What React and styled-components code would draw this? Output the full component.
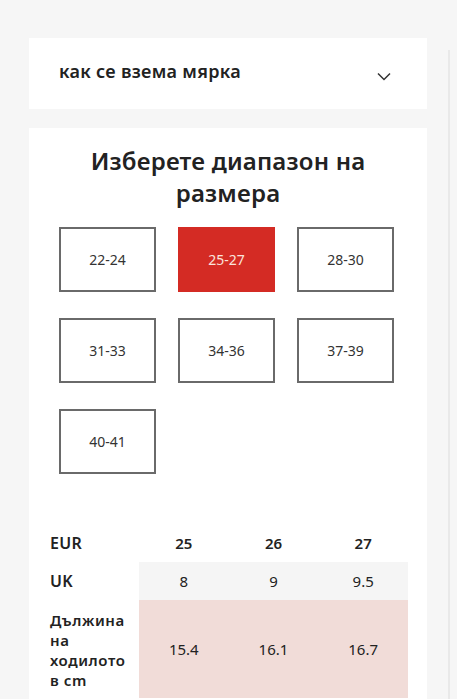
import styled, { createGlobalStyle } from "styled-components";

const GlobalStyle = createGlobalStyle`
  html, body {
    margin: 0;
    padding: 0;
    background: #f6f6f6;
  }
  body {
    font-family: "Noto Sans", "Open Sans", sans-serif;
    color: #222;
  }
`;

const ranges = ["22-24", "25-27", "28-30", "31-33", "34-36", "37-39", "40-41"];

const Page = () => {
  return (
    <Wrapper lang="bg">
      <GlobalStyle />
      <Column>
        <Accordion>
          <AccordionTitle>как се взема мярка</AccordionTitle>
          <svg width="14" height="9" viewBox="0 0 14 9" fill="none">
            <path d="M1 1.5 L7 7.5 L13 1.5" stroke="#333" strokeWidth="1.5" />
          </svg>
        </Accordion>

        <Card>
          <Heading>Изберете диапазон на размера</Heading>

          <RangeGrid>
            {ranges.map((r) => (
              <RangeBox key={r} $active={r === "25-27"}>
                {r}
              </RangeBox>
            ))}
          </RangeGrid>

          <SizeTable>
            <tbody>
              <tr>
                <Label>EUR</Label>
                <Cell $bold>25</Cell>
                <Cell $bold>26</Cell>
                <Cell $bold>27</Cell>
              </tr>
              <tr>
                <Label>UK</Label>
                <Cell $tone="grey">8</Cell>
                <Cell $tone="grey">9</Cell>
                <Cell $tone="grey">9.5</Cell>
              </tr>
              <tr>
                <Label $tall>
                  Дължина
                  <br />
                  на
                  <br />
                  ходилото
                  <br />в cm
                </Label>
                <Cell $tone="pink">15.4</Cell>
                <Cell $tone="pink">16.1</Cell>
                <Cell $tone="pink">16.7</Cell>
              </tr>
            </tbody>
          </SizeTable>
        </Card>
      </Column>
      <Rail />
    </Wrapper>
  );
};

const Wrapper = styled.div`
  display: flex;
  width: 457px;
  min-height: 100vh;
`;

const Column = styled.div`
  width: 398px;
  padding: 38px 0 0 29px;
  display: flex;
  flex-direction: column;
  gap: 19px;
`;

const Rail = styled.div`
  width: 2px;
  margin: 50px 0 0 21px;
  background: #e9e9e9;
`;

const Accordion = styled.div`
  flex-shrink: 0;
  background: #fff;
  height: 71px;
  display: flex;
  align-items: center;
  justify-content: space-between;
  padding: 0 36px 0 30px;
  box-sizing: border-box;

  svg {
    margin-top: 6px;
  }
`;

const AccordionTitle = styled.span`
  font-size: 18px;
  font-weight: 600;
  color: #222;
  letter-spacing: 0.3px;
  margin-top: -6px;
`;

const Card = styled.div`
  flex-shrink: 0;
  background: #fff;
  padding: 17px 0 0;
  min-height: 600px;
`;

const Heading = styled.h2`
  margin: 0 auto;
  width: 320px;
  text-align: center;
  font-size: 24px;
  line-height: 32px;
  font-weight: 600;
  color: #222;
  letter-spacing: 0.2px;
`;

const RangeGrid = styled.div`
  display: grid;
  grid-template-columns: repeat(3, 97px);
  column-gap: 22px;
  row-gap: 26px;
  margin: 18px 0 0 30px;
`;

const RangeBox = styled.div`
  height: 65px;
  box-sizing: border-box;
  display: flex;
  align-items: center;
  justify-content: center;
  font-size: 14px;
  color: ${({ $active }) => ($active ? "#fbe3dc" : "#333")};
  background: ${({ $active }) => ($active ? "#d42b24" : "#fff")};
  border: 2px solid ${({ $active }) => ($active ? "#d42b24" : "#6a6a6a")};
`;

const SizeTable = styled.table`
  margin: 50px 0 0 21px;
  border-collapse: collapse;
  width: 358px;
  table-layout: fixed;
`;

const Label = styled.td`
  width: 89px;
  padding: ${({ $tall }) => ($tall ? "10px 0 8px" : "0")};
  height: ${({ $tall }) => ($tall ? "auto" : "38px")};
  font-size: ${({ $tall }) => ($tall ? "15px" : "16px")};
  line-height: 20px;
  font-weight: 600;
  color: #222;
  letter-spacing: ${({ $tall }) => ($tall ? "0.6px" : "0.3px")};
  vertical-align: middle;
`;

const Cell = styled.td`
  text-align: center;
  font-size: 15px;
  font-weight: ${({ $bold }) => ($bold ? 600 : 400)};
  color: #222;
  background: ${({ $tone }) =>
    $tone === "grey" ? "#f5f5f5" : $tone === "pink" ? "#f1dcd8" : "transparent"};
`;

export default function App() {
  return <Page />;
}
